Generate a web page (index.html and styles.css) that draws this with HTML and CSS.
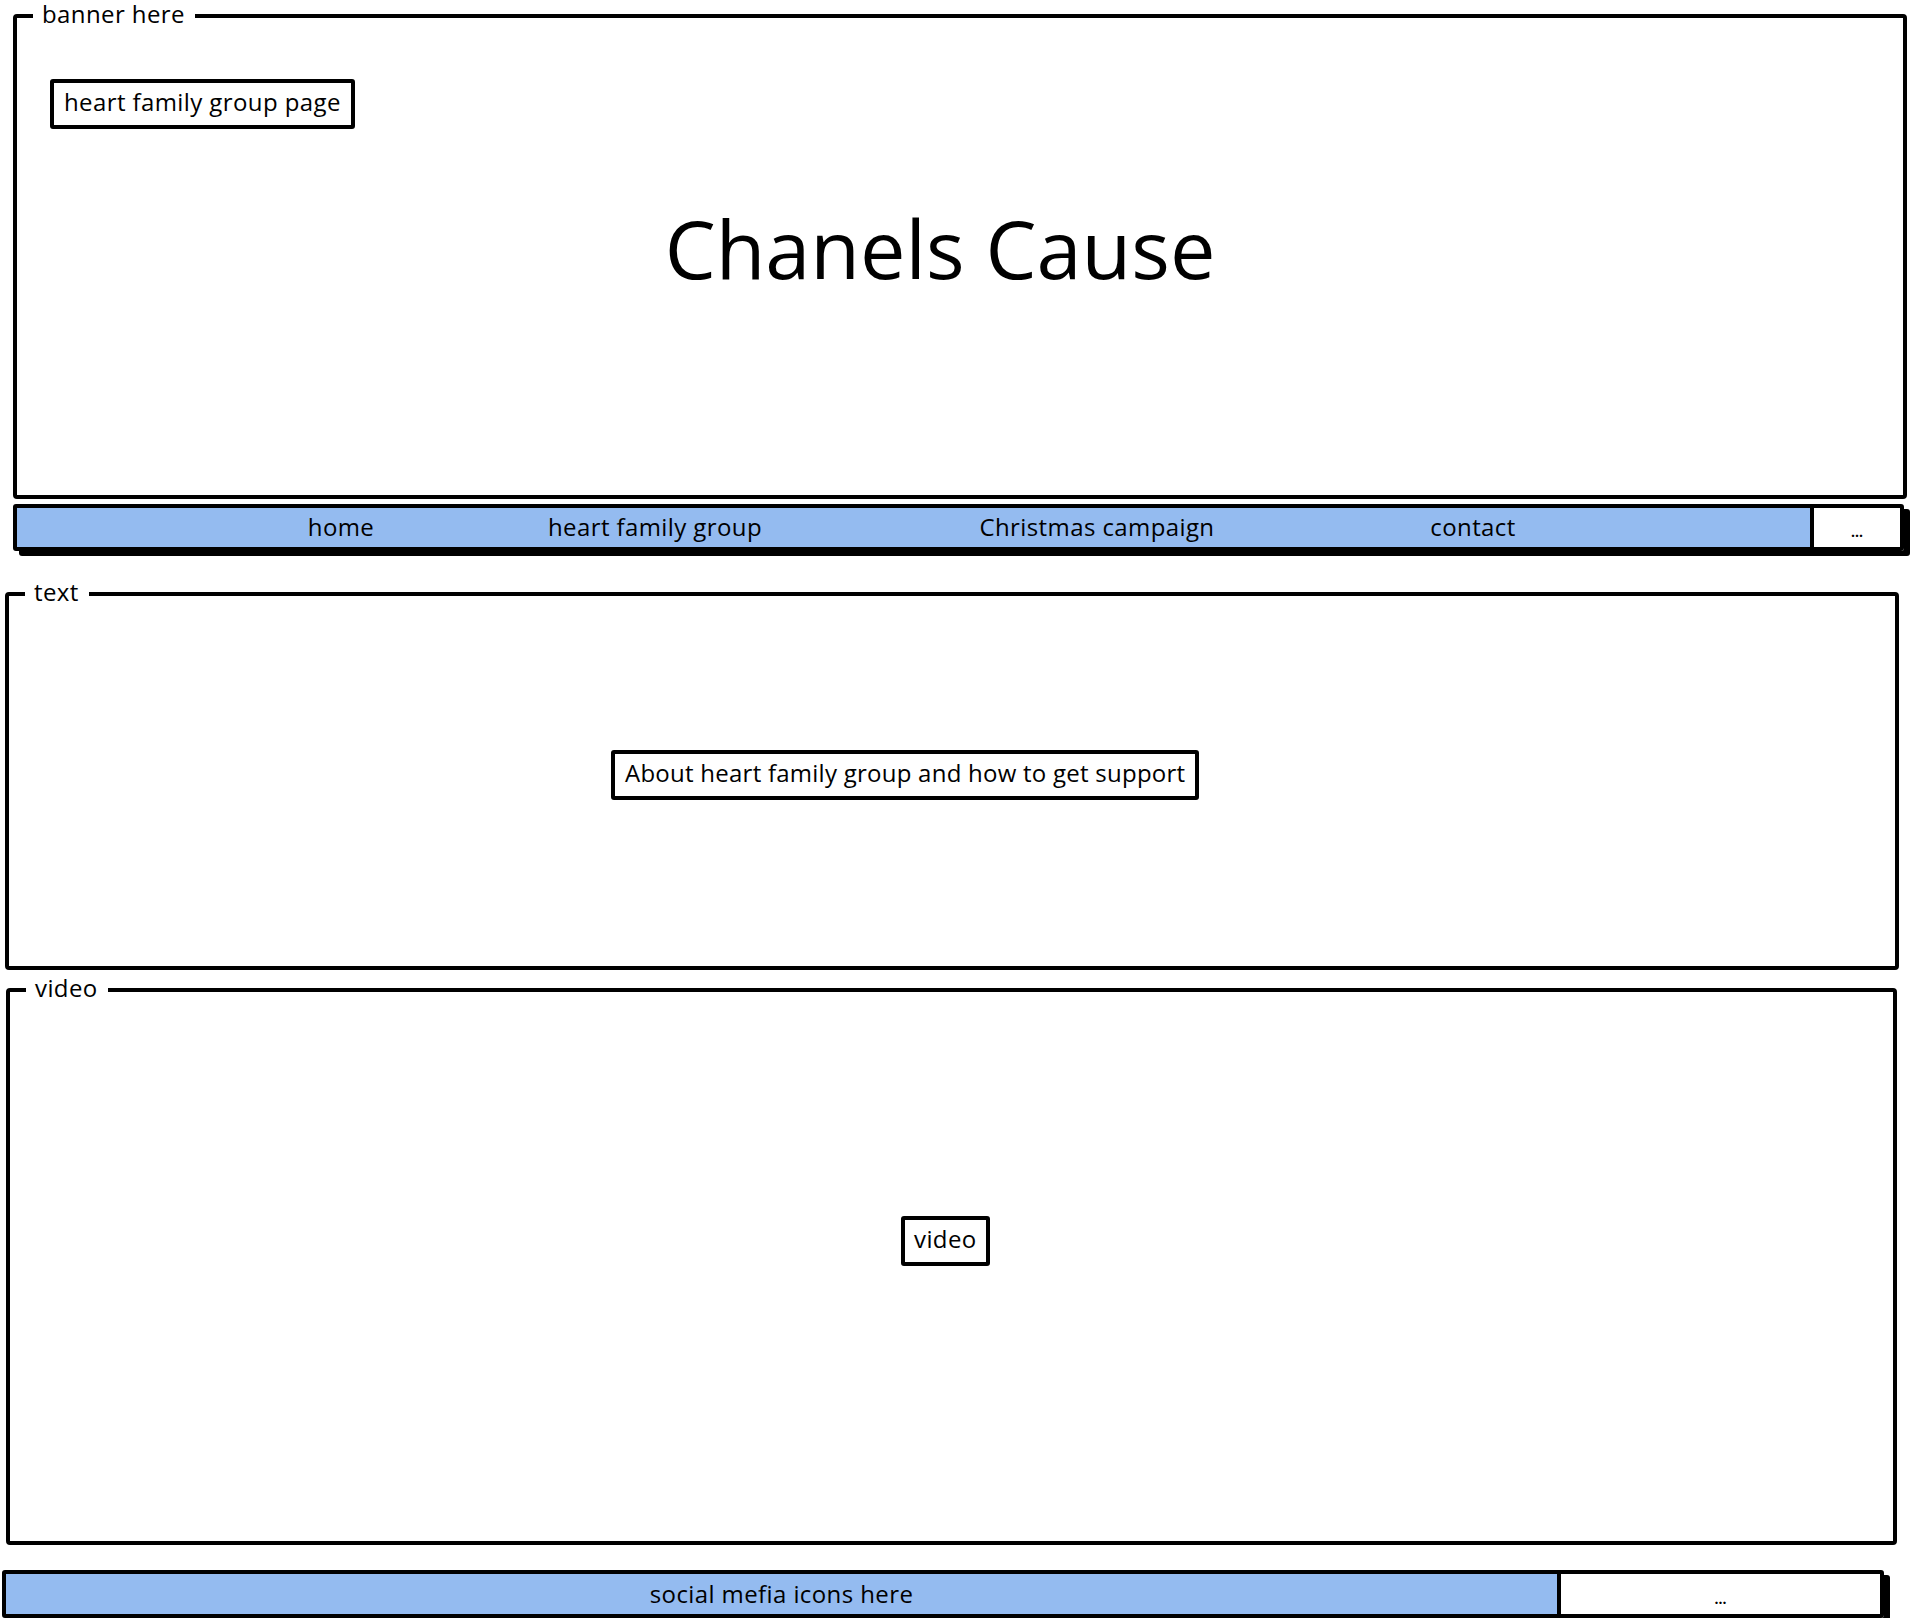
FILE: index.html
```html
<!DOCTYPE html>
<html lang="en">
<head>
    <meta charset="UTF-8">
    <meta name="viewport" content="width=device-width, initial-scale=1.0">
    <title>Chanels Cause - wireframe</title>
    <link rel="stylesheet" href="styles.css">
</head>
<body>
    <!-- Banner -->
    <fieldset class="panel banner">
        <legend>banner here</legend>
        <div class="label-box page-tag">heart family group page</div>
        <h1 class="site-title">Chanels Cause</h1>
    </fieldset>

    <!-- Navigation -->
    <nav class="bar nav">
        <div class="bar-main nav-items">
            <span>home</span>
            <span>heart family group</span>
            <span>Christmas campaign</span>
            <span>contact</span>
        </div>
        <div class="bar-more nav-more">...</div>
    </nav>

    <!-- Text section -->
    <fieldset class="panel text-panel">
        <legend>text</legend>
        <div class="label-box about-box">About heart family group and how to get support</div>
    </fieldset>

    <!-- Video section -->
    <fieldset class="panel video-panel">
        <legend>video</legend>
        <div class="label-box video-box">video</div>
    </fieldset>

    <!-- Footer -->
    <footer class="bar footer">
        <div class="bar-main footer-main">social mefia icons here</div>
        <div class="bar-more footer-more">...</div>
    </footer>
</body>
</html>
```

FILE: styles.css
```css
* {
    margin: 0;
    padding: 0;
    box-sizing: border-box;
}

:root {
    --ink: #000;
    --bar-blue: #94bbf0;
}

body {
    font-family: 'Open Sans', sans-serif;
    font-size: 24px;
    letter-spacing: 0.4px;
    color: var(--ink);
    background: #fff;
    width: 1912px;
}

.panel {
    display: block;
    border: 4px solid var(--ink);
    border-radius: 4px;
    min-width: 0;
}

.panel legend {
    margin-left: 16px;
    padding: 0 10px 4px 9px;
    line-height: 28px;
    font-size: 24px;
}

.label-box {
    display: inline-block;
    border: 4px solid var(--ink);
    border-radius: 3px;
    line-height: 30px;
    white-space: nowrap;
}

/* Banner */
.banner {
    margin-left: 13px;
    width: 1894px;
    height: 499px;
}

.page-tag {
    margin: 47px 0 0 33px;
    padding: 4px 10px 8px;
}

.site-title {
    margin-top: 78px;
    padding-right: 40px;
    text-align: center;
    font-size: 81px;
    font-weight: 400;
    line-height: 1;
    letter-spacing: 0;
}

/* Bars */
.bar {
    display: flex;
    height: 47px;
    border: 4px solid var(--ink);
    border-radius: 3px;
    box-shadow: 6px 5px 0 var(--ink);
}

.bar-main {
    background: var(--bar-blue);
    display: flex;
    align-items: center;
    padding-bottom: 2px;
}

.bar-more {
    background: #fff;
    border-left: 4px solid var(--ink);
    display: flex;
    align-items: center;
    justify-content: center;
    font-size: 14px;
    font-weight: 700;
    letter-spacing: 0;
    padding-top: 8px;
}

.nav {
    margin: 5px 0 0 13px;
    width: 1891px;
}

.nav-items {
    flex: 1;
    display: grid;
    grid-template-columns: 314px 314px 570px 182px;
    padding-left: 167px;
}

.nav-items span {
    text-align: center;
}

.nav-more {
    width: 90px;
}

/* Text section */
.text-panel {
    margin: 27px 0 0 5px;
    width: 1894px;
    height: 392px;
}

.about-box {
    margin: 140px 0 0 602px;
    padding: 4px 10px 8px;
    letter-spacing: 0.25px;
}

/* Video section */
.video-panel {
    margin: 4px 0 0 6px;
    width: 1891px;
    height: 571px;
}

.video-box {
    margin: 210px 0 0 891px;
    padding: 4px 9px 8px;
}

/* Footer */
.footer {
    margin: 25px 0 0 2px;
    width: 1882px;
    height: 48px;
}

.footer-main {
    width: 1551px;
    justify-content: center;
}

.footer-more {
    flex: 1;
}
```
